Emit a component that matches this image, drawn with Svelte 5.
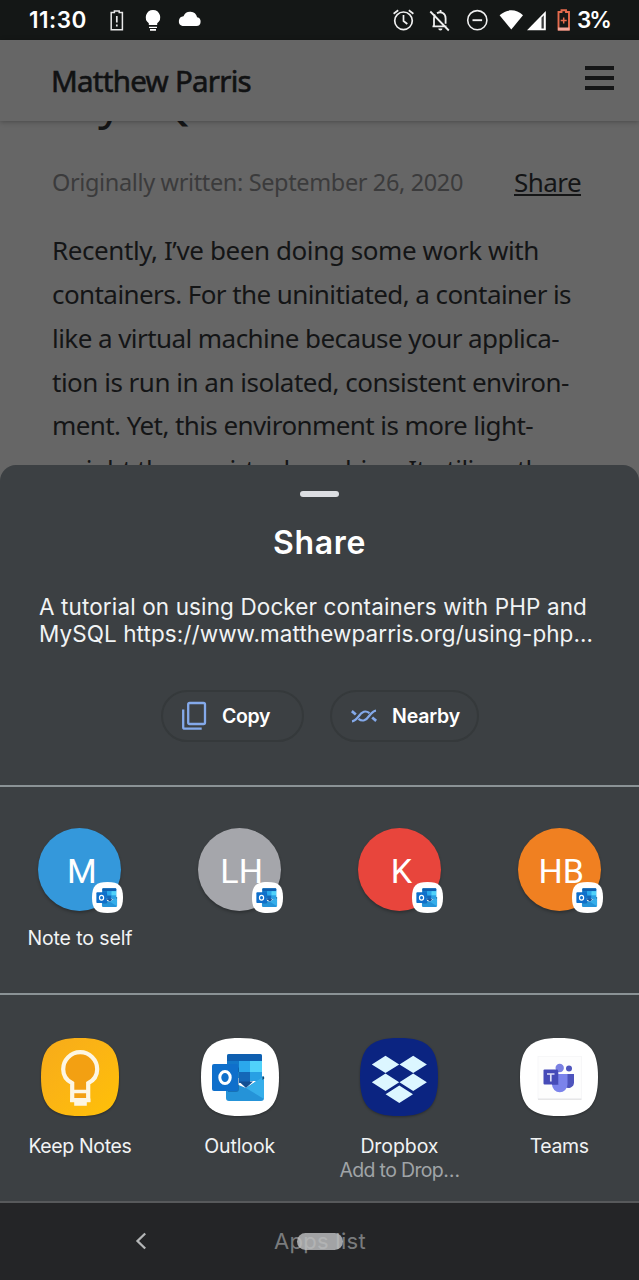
<script>
  // Spreads letter spacing so a line of text takes the given width.
  function fit(node, width) {
    const range = document.createRange();
    range.selectNodeContents(node);
    const natural = range.getBoundingClientRect().width;
    const count = node.textContent.trim().length;
    node.style.letterSpacing = `${(width - natural) / count}px`;
  }

  const article = [
    ['Recently, I’ve been doing some work with', 487],
    ['containers. For the uninitiated, a container is', 519],
    ['like a virtual machine because your applica-', 507],
    ['tion is run in an isolated, consistent environ-', 517],
    ['ment. Yet, this environment is more light-', 481],
    ['weight than a virtual machine. It utilizes the', 503]
  ];

  const contacts = [
    { initials: 'M', color: '#3498db', name: 'Note to self', width: 105 },
    { initials: 'LH', color: '#a5a6ab', name: '' },
    { initials: 'K', color: '#e8453c', name: '' },
    { initials: 'HB', color: '#f08021', name: '' }
  ];

  const apps = [
    { id: 'keep', name: 'Keep Notes', width: 103 },
    { id: 'outlook', name: 'Outlook', width: 71 },
    { id: 'dropbox', name: 'Dropbox', width: 78, note: 'Add to Drop…' },
    { id: 'teams', name: 'Teams', width: 59 }
  ];

  const squircle = 'M39 0C68 0 78 10 78 39S68 78 39 78S0 68 0 39S10 0 39 0Z';
</script>

{#snippet outlookMark()}
  <path d="M28 16h31a2 2 0 0 1 2 2v22H26V18a2 2 0 0 1 2-2z" fill="#28a8ea" />
  <path d="M28 16h31a2 2 0 0 1 2 2v5H26v-5a2 2 0 0 1 2-2z" fill="#0f5fb0" />
  <path d="M26 23h12v11H26z" fill="#1277c9" />
  <path d="M38 23h11v11H38z" fill="#2ba8ec" />
  <path d="M49 23h12v11H49z" fill="#50d2fa" />
  <path d="M38 34h11v11H38z" fill="#1467b8" />
  <path d="M49 34h12v9H49z" fill="#28a0e4" />
  <path d="M25 42l20 8 18-12v22a3 3 0 0 1-3 3H28a3 3 0 0 1-3-3z" fill="#2593d8" />
  <path d="M38 43.500h14l-7 6.500z" fill="#124f93" />
  <path d="M63 38v23L45 50z" fill="#36aeea" />
  <path d="M61.500 38l2 2-2 2z" fill="#123c60" />
  <path d="M28 29h8a2 2 0 0 1 2 2v20a3 3 0 0 1-3 3h-8z" fill="#0a4f94" opacity=".5" />
  <rect x="11" y="26" width="26" height="27" rx="2" fill="#0f6fcb" />
  <ellipse cx="24" cy="39.500" rx="5.200" ry="5.900" fill="none" stroke="#fff" stroke-width="3" />
{/snippet}

<div class="screen">
  <div class="status">
    <span class="clock" use:fit={58}>11:30</span>
    <svg class="battery-low" viewBox="108 0 18 40" width="18" height="40">
      <path d="M111.200 12.500h3.200v-1.500h4.800v1.500h3.200v17.300h-11.200z" fill="none" stroke="#e8e8e8" stroke-width="1.500" />
      <path d="M116.800 16v6.500M116.800 24.500v2" stroke="#e8e8e8" stroke-width="1.700" />
    </svg>
    <svg class="bulb" viewBox="144 0 18 40" width="18" height="40">
      <path d="M153 10a7.300 7.300 0 0 0-4.200 13.200V25h8.400v-1.800A7.300 7.300 0 0 0 153 10z" fill="#fff" />
      <path d="M149 26.700h8v1.300h-8zM150 29h6v1.800h-6z" fill="#fff" />
    </svg>
    <svg class="cloud" viewBox="176 0 26 40" width="26" height="40">
      <path d="M182.500 26h14a4.400 4.400 0 0 0 .6-8.700 7.200 7.200 0 0 0-13.600-1.100A5 5 0 0 0 182.500 26z" fill="#fff" />
    </svg>
    <div class="status-right">
      <svg viewBox="391 0 26 40" width="26" height="40" fill="none" stroke="#f0f0f0" stroke-width="1.700">
        <circle cx="403.500" cy="20.800" r="8.800" />
        <path d="M403.500 15v6l3.800 3M393.600 13.800l4.600-3.500M413.400 13.800l-4.600-3.500" />
      </svg>
      <svg viewBox="427 0 26 40" width="26" height="40" fill="none" stroke="#f0f0f0" stroke-width="1.800">
        <path d="M434 25.500v-7.500c0-1.300.4-2.500 1.100-3.500M437 13.200c4-2.400 8.600.3 8.600 5v5.500M432.500 26.300h14M430.300 11.500l18.500 19M440.500 10v2.500" />
        <path d="M438.300 28.500h4.200a2 2 0 0 1-4.200 0z" fill="#f0f0f0" stroke="none" />
      </svg>
      <svg viewBox="464 0 26 40" width="26" height="40" fill="none" stroke="#f0f0f0" stroke-width="1.600">
        <circle cx="477.300" cy="20.200" r="9.600" />
        <path d="M472.500 20.200h9.600" stroke-width="1.900" />
      </svg>
      <svg viewBox="498 0 26 40" width="26" height="40">
        <path d="M499.600 15.200c7-6.500 16.400-6.500 23.400 0L511.300 29.500z" fill="#fff" />
      </svg>
      <svg viewBox="526 0 22 40" width="22" height="40">
        <path d="M527 30.300L545.800 11v19.300z" fill="#fff" />
        <path d="M541.500 17.800l2.300-2.500v13.300h-2.300z" fill="#3b3d3d" />
      </svg>
      <svg viewBox="555 0 18 40" width="18" height="40">
        <path d="M558.500 12h3v-1.800h4.500V12h3v17.500h-10.500z" fill="none" stroke="#e56b4d" stroke-width="1.900" />
        <path d="M560.700 20.500h6M563.700 17.500v6" stroke="#e56b4d" stroke-width="1.500" />
        <path d="M558 27.500h11.500v3H558z" fill="#f0a79b" />
      </svg>
      <span class="percent" use:fit={33}>3%</span>
    </div>
  </div>

  <header>
    <span class="site" use:fit={200}>Matthew Parris</span>
    <div class="burger"><i></i><i></i><i></i></div>
  </header>

  <main>
    <div class="heading"><span use:fit={174}>MySQL</span></div>
    <div class="meta">
      <span class="date" use:fit={411}>Originally written: September 26, 2020</span>
      <span class="share-link" use:fit={67}>Share</span>
    </div>
    <div class="article">
      {#each article as [line, width]}
        <p><span use:fit={width}>{line}</span></p>
      {/each}
    </div>
  </main>

  <section class="sheet">
    <div class="handle"></div>
    <h2><span use:fit={93}>Share</span></h2>
    <div class="preview">
      <p><span use:fit={548}>A tutorial on using Docker containers with PHP and</span></p>
      <p><span use:fit={554}>MySQL https://www.matthewparris.org/using-php…</span></p>
    </div>
    <div class="actions">
      <div class="chip copy">
        <svg viewBox="0 0 26 30" width="26" height="30" fill="none" stroke="#84a9ea" stroke-width="2.300">
          <rect x="7.200" y="2" width="16.800" height="21" rx="1.500" />
          <path d="M2.200 8.500v17.700a1.500 1.500 0 0 0 1.500 1.500h17" />
        </svg>
        <span use:fit={48}>Copy</span>
      </div>
      <div class="chip nearby">
        <svg viewBox="0 0 26 14" width="26" height="14" fill="none" stroke="#84a9ea" stroke-width="2.200">
          <path d="M1 12.300C4 12 5.500 10 7.500 7.500C11 2.500 14.500 1 18.500 4.200M25 1.700C22 2 20.500 4 18.500 6.500C15 11.500 11.500 13 7.500 9.800" />
          <path d="M.8 2.200l4 3.300M21.200 8.500l4 3.300" stroke-width="2.800" />
        </svg>
        <span use:fit={68}>Nearby</span>
      </div>
    </div>

    <div class="row contacts">
      {#each contacts as c}
        <div class="cell">
          <div class="avatar" style:background={c.color}>
            <span>{c.initials}</span>
            <svg class="badge" viewBox="0 0 78 78" width="31" height="31">
              <path d={squircle} fill="#fff" />
              {@render outlookMark()}
            </svg>
          </div>
          {#if c.name}<div class="label"><span use:fit={c.width}>{c.name}</span></div>{/if}
        </div>
      {/each}
    </div>

    <div class="row apps">
      {#each apps as app}
        <div class="cell">
          <svg class="app" viewBox="0 0 78 78" width="78" height="78">
            {#if app.id === 'keep'}
              <defs>
                <linearGradient id="kg" x1="0" y1="0" x2="1" y2="1">
                  <stop offset="0" stop-color="#f7ab1a" /><stop offset=".45" stop-color="#fbb414" /><stop offset="1" stop-color="#ffc107" />
                </linearGradient>
              </defs>
              <path d={squircle} fill="url(#kg)" />
              <path d="M39 14a17 17 0 0 0-8.500 31.500V62h17V45.500A17 17 0 0 0 39 14z" fill="#f3a012" />
              <path d="M31.200 62V45.200C25 42 22.200 37 22.200 31.200a17 17 0 0 1 34 0C56.200 37 53.400 42 47.200 45.200V62z" fill="none" stroke="#fdf6e3" stroke-width="4.200" />
              <path d="M31 53.500h16.500" stroke="#fdf6e3" stroke-width="3.500" />
              <path d="M29.200 60.500h20.200v3.700h-3.600v3.500H33.200v-3.500h-4z" fill="#fdf6e3" />
            {:else if app.id === 'outlook'}
              <path d={squircle} fill="#fff" />
              {@render outlookMark()}
            {:else if app.id === 'dropbox'}
              <path d={squircle} fill="#0b2481" />
              <path d="M25.500 17.700l13.700 8.700-13.700 8.700-13.700-8.700zM53.200 17.700l13.700 8.700-13.700 8.700-13.700-8.700zM25.500 35.600l13.700 8.700-13.700 8.700-13.700-8.700zM53.200 35.600l13.700 8.700-13.700 8.700-13.700-8.700zM39.300 47.500L53 56.200l-13.700 8.700-13.700-8.700z" fill="#dcf6ff" />
            {:else}
              <path d={squircle} fill="#fff" />
              <rect x="18" y="18.500" width="43.500" height="42.500" fill="#fdfdfd" stroke="#f5f5f7" stroke-width=".8" />
              <path d="M18 61.200h43.500" stroke="#dcdcde" stroke-width="1" />
              <circle cx="49" cy="30.500" r="3" fill="#4f55bd" />
              <circle cx="39.700" cy="30" r="4.200" fill="#7a80e2" />
              <path d="M43 36h11v8.500a5.500 5.500 0 0 1-9 4.200z" fill="#4d53bc" />
              <path d="M32 36h15.500v10.500a7.700 7.700 0 0 1-15.500 0z" fill="#7b83eb" />
              <path d="M32 33h6.500v14H32z" fill="#5159bf" opacity=".7" />
              <rect x="23.500" y="31.500" width="14.500" height="15" rx="1" fill="#464bb8" />
              <path d="M27 36h7.500M30.800 36v7.500" stroke="#dfe0f7" stroke-width="1.700" />
            {/if}
          </svg>
          <div class="label"><span use:fit={app.width}>{app.name}</span></div>
          {#if app.note}<div class="label note"><span use:fit={120}>{app.note}</span></div>{/if}
        </div>
      {/each}
    </div>
  </section>

  <nav>
    <svg viewBox="0 0 12 20" width="12" height="20" fill="none" stroke="#b4b6b7" stroke-width="2.300">
      <path d="M10.200 2.500L2.500 10l7.700 7.500" />
    </svg>
    <div class="apps-list">
      <span use:fit={92}>Apps list</span>
      <div class="pill"></div>
    </div>
  </nav>
</div>

<style>
  :global(body) { background: #666; }
  .screen {
    width: 639px;
    height: 1280px;
    display: flex;
    flex-direction: column;
    overflow: hidden;
    background: #666;
    font-family: Inter, sans-serif;
  }
  span { white-space: nowrap; display: inline-block; }
  p, h2 { margin: 0; }
  svg { display: block; flex: none; }

  .status {
    height: 40px;
    flex: none;
    display: flex;
    align-items: center;
    background: #141716;
    color: #fff;
    font-size: 22.500px;
    font-weight: 600;
    line-height: 39px;
  }
  .clock { width: 58px; margin-left: 29px; }
  .battery-low { margin-left: 21px; }
  .bulb { margin-left: 18px; }
  .cloud { margin-left: 14px; }
  .clock, .percent { height: 40px; }
  .status-right { display: flex; margin-left: 189px; }
  .status-right svg:nth-child(2) { margin-left: 10px; }
  .status-right svg:nth-child(3) { margin-left: 11px; }
  .status-right svg:nth-child(4) { margin-left: 8px; }
  .status-right svg:nth-child(5) { margin-left: 2px; }
  .status-right svg:nth-child(6) { margin-left: 7px; }
  .percent { margin-left: 4px; }

  header {
    height: 81px;
    flex: none;
    display: flex;
    justify-content: space-between;
    padding: 0 25px 0 51px;
    background: #666;
    box-shadow: 0 1px 5px rgba(0, 0, 0, .28);
    position: relative;
    z-index: 1;
    color: #111213;
    font-family: "Noto Sans", sans-serif;
  }
  .site { font-size: 29.500px; line-height: 82px; -webkit-text-stroke: .6px #111213; }
  .burger { display: flex; flex-direction: column; gap: 6px; padding-top: 26px; }
  .burger i { width: 29px; height: 4px; background: #151617; }

  main {
    height: 344px;
    flex: none;
    overflow: hidden;
    padding: 0 51px 0 52px;
    font-family: "Noto Sans", sans-serif;
    color: #141516;
  }
  .heading { height: 39px; font-size: 48px; line-height: 39px; }
  .heading span { display: block; margin-left: -1px; translate: 0 -40px; }
  .meta { display: flex; height: 44px; line-height: 44px; }
  .date { width: 462px; color: #3b3b3c; font-size: 23.500px; }
  .share-link {
    font-size: 26px;
    text-decoration: underline;
    text-decoration-thickness: 1.500px;
    text-underline-offset: 2px;
  }
  .article { padding-top: 25px; font-size: 26px; line-height: 43.850px; }
  .article p { height: 43.850px; }

  .sheet {
    flex: none;
    height: 736px;
    background: #3c4043;
    border-radius: 16px 16px 0 0;
    color: #f1f3f4;
    display: flex;
    flex-direction: column;
  }
  .handle { width: 39px; height: 6px; border-radius: 3px; background: #dcdee2; margin: 26px auto 0; }
  h2 { text-align: center; font-size: 32px; font-weight: 600; line-height: 40px; height: 40px; margin-top: 26px; color: #fff; }
  .preview { padding: 30px 39px 0; font-size: 22.500px; line-height: 27px; height: 54px; }
  .preview p { height: 27px; }
  .actions { display: flex; padding-left: 161px; gap: 26px; height: 95px; margin-top: 43px; }
  .chip {
    box-sizing: border-box;
    height: 52px;
    border: 2px solid #35393b;
    border-radius: 26px;
    display: flex;
    align-items: center;
    font-size: 19.500px;
    font-weight: 600;
    color: #fff;
  }
  .copy { width: 143px; padding-left: 18px; gap: 15px; }
  .nearby { width: 149px; padding-left: 19px; gap: 15px; }

  .row { display: grid; grid-template-columns: repeat(4, 1fr); border-top: 2px solid #8b9396; }
  .contacts { height: 165px; padding-top: 41px; }
  .cell { display: flex; flex-direction: column; align-items: center; }
  .avatar {
    position: relative;
    width: 83px;
    height: 83px;
    border-radius: 50%;
    box-shadow: 0 2px 3px rgba(0, 0, 0, .25);
    text-align: center;
    font: 400 34px/86px Roboto, sans-serif;
    color: #fff;
  }
  .avatar span { padding-left: 4px; }
  .badge { position: absolute; right: -2px; bottom: -2px; }
  .label { font-size: 19.500px; line-height: 24px; height: 24px; margin-top: 15px; }
  .apps { padding-top: 43px; }
  .apps .label { margin-top: 18px; }
  .app { filter: drop-shadow(0 1px 1px rgba(0, 0, 0, .3)); }
  .apps .note { margin-top: 0; color: #a0a4a7; }

  nav {
    flex: none;
    box-sizing: border-box;
    height: 79px;
    background: #242527;
    border-top: 2px solid #57595b;
    display: flex;
    align-items: center;
    padding: 0 0 2px 135px;
  }
  .apps-list { position: relative; margin-left: 127px; color: #797b7d; font-size: 22px; line-height: 30px; }
  .pill {
    position: absolute;
    left: 23px;
    top: 7px;
    width: 46px;
    height: 17px;
    border-radius: 9px;
    background: rgba(190, 191, 193, .82);
  }
</style>
